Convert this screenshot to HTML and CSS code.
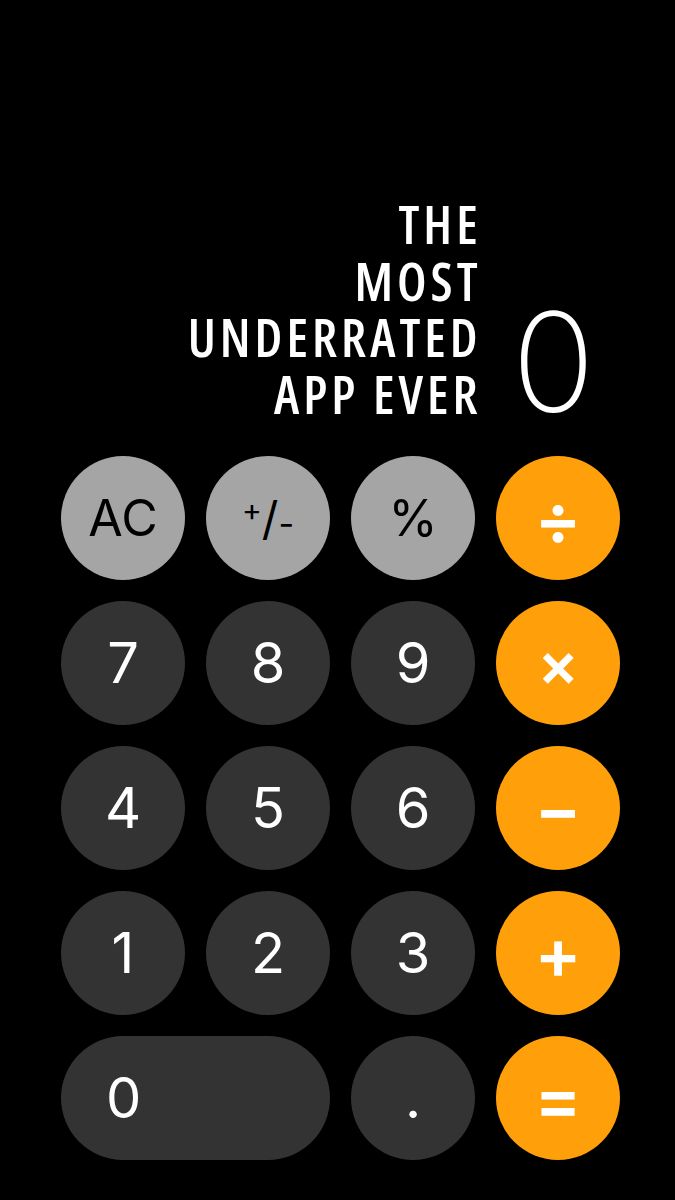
FILE: index.html
```html
<!DOCTYPE html>
<html lang="en">
<head>
  <meta charset="UTF-8" />
  <meta name="viewport" content="width=device-width, initial-scale=1.0"/>
  <title>Calculator</title>
  <link rel="stylesheet" href="styles.css">
</head>
<body>

  <main class="calc">
    <div class="display">
      <h1 class="tagline">THE<br>MOST<br>UNDERRATED<br>APP EVER</h1>
      <div class="result">0</div>
    </div>

    <div class="keypad">
      <button class="key fn">AC</button>
      <button class="key fn"><span class="pm"><span class="pm-plus">+</span><span class="pm-slash">/</span><span class="pm-minus">-</span></span></button>
      <button class="key fn">%</button>
      <button class="key op">÷</button>

      <button class="key">7</button>
      <button class="key">8</button>
      <button class="key">9</button>
      <button class="key op times">×</button>

      <button class="key">4</button>
      <button class="key">5</button>
      <button class="key">6</button>
      <button class="key op">−</button>

      <button class="key">1</button>
      <button class="key">2</button>
      <button class="key">3</button>
      <button class="key op">+</button>

      <button class="key zero">0</button>
      <button class="key">.</button>
      <button class="key op">=</button>
    </div>
  </main>

</body>
</html>
```

FILE: styles.css
```css
body {
  margin: 0;
  background-color: #000;
  color: #fff;
  font-family: Inter, Roboto, "Liberation Sans", sans-serif;
}

.calc {
  width: 675px;
  height: 1200px;
  padding: 0 56px 0 61px;
  box-sizing: border-box;
}

.display {
  height: 456px;
  box-sizing: border-box;
  padding-bottom: 34px;
  padding-right: 24px;
  display: flex;
  justify-content: flex-end;
  align-items: flex-end;
  gap: 34px;
}

.tagline {
  margin: 0 -4px 0 0;
  font-family: "Open Sans", "DejaVu Sans Condensed", sans-serif;
  font-stretch: 87.5%;
  font-weight: 600;
  font-size: 52px;
  line-height: 56.5px;
  letter-spacing: 4px;
  text-align: right;
}

.result {
  font-family: Inter, Roboto, sans-serif;
  font-weight: 200;
  font-size: 138px;
  line-height: 0.86;
}

.keypad {
  display: grid;
  grid-template-columns: repeat(4, 124px);
  grid-auto-rows: 124px;
  gap: 21px;
}

.key {
  border: none;
  border-radius: 62px;
  background-color: #333333;
  color: #fff;
  font-family: Inter, Roboto, sans-serif;
  font-size: 56px;
  font-weight: 400;
  padding: 0;
  display: flex;
  align-items: center;
  justify-content: center;
}

.key.fn {
  background-color: #a5a5a5;
  color: #000;
  font-size: 50px;
}

.key.op {
  background-color: #ff9f0a;
  font-size: 70px;
  font-weight: 600;
}

.key.op.times {
  font-size: 62px;
}

.key.zero {
  grid-column: span 2;
  justify-content: flex-start;
  padding-left: 45px;
}

.pm {
  display: flex;
  align-items: flex-start;
  font-size: 46px;
  line-height: 1;
}

.pm-plus {
  font-size: 30px;
}

.pm-minus {
  font-size: 34px;
  align-self: flex-end;
}
```
